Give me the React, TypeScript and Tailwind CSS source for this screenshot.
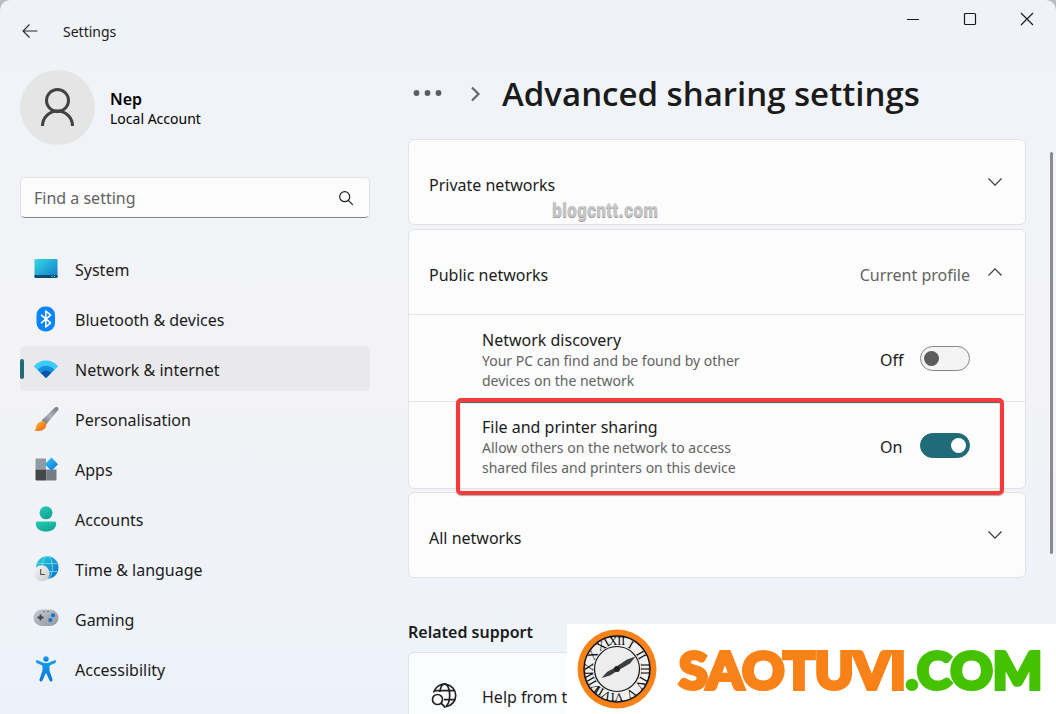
import { useState } from "react";
import type { ReactNode } from "react";

const NAV_ITEMS: { label: string; icon: ReactNode }[] = [
  { label: "System", icon: <SystemIcon /> },
  { label: "Bluetooth & devices", icon: <BluetoothIcon /> },
  { label: "Network & internet", icon: <WifiIcon /> },
  { label: "Personalisation", icon: <BrushIcon /> },
  { label: "Apps", icon: <AppsIcon /> },
  { label: "Accounts", icon: <AccountsIcon /> },
  { label: "Time & language", icon: <TimeIcon /> },
  { label: "Gaming", icon: <GamingIcon /> },
  { label: "Accessibility", icon: <AccessibilityIcon /> },
];

function SystemIcon() {
  return (
    <svg width="26" height="26" viewBox="0 0 26 26">
      <defs>
        <linearGradient id="sys" x1="0" y1="0" x2="1" y2="1">
          <stop offset="0" stopColor="#36dbe0" />
          <stop offset="1" stopColor="#1077cf" />
        </linearGradient>
      </defs>
      <rect x="1.500" y="3" width="23" height="19" rx="1.300" fill="url(#sys)" />
      <path d="M1.500 19h23v1.700a1.300 1.300 0 0 1-1.300 1.300H2.800a1.300 1.300 0 0 1-1.300-1.300z" fill="#0b4a6c" />
      <path d="M18.500 20.500h1M21 20.500h1" stroke="#bfe9f5" strokeWidth="1" />
    </svg>
  );
}

function BluetoothIcon() {
  return (
    <svg width="26" height="26" viewBox="0 0 26 26">
      <rect x="3.500" y="0.500" width="18.500" height="25" rx="8.500" fill="#0a84fb" />
      <path d="M8 8.800l9.600 8L12.800 21V5l4.800 4.200L8 17.200" fill="none" stroke="#fff" strokeWidth="1.600" strokeLinejoin="round" />
    </svg>
  );
}

function WifiIcon() {
  return (
    <svg width="26" height="26" viewBox="0 0 26 26">
      <path d="M0.800 10.200C7.500 2.600 18.500 2.600 25.200 10.200L13 22z" fill="#3bcbf6" />
      <path d="M4.600 13.800C9.500 8.300 16.500 8.300 21.400 13.800L13 22z" fill="#1590e2" />
      <path d="M7.800 17C10.800 13.700 15.200 13.700 18.200 17L13 22z" fill="#0d55a6" />
    </svg>
  );
}

function BrushIcon() {
  return (
    <svg width="26" height="26" viewBox="0 0 26 26">
      <defs>
        <linearGradient id="handle" x1="1" y1="0" x2="0" y2="1">
          <stop offset="0" stopColor="#6e7984" />
          <stop offset="0.500" stopColor="#a9b4bd" />
          <stop offset="1" stopColor="#66717b" />
        </linearGradient>
        <linearGradient id="bristle" x1="0" y1="0" x2="1" y2="1">
          <stop offset="0" stopColor="#ffc530" />
          <stop offset="1" stopColor="#ee5a16" />
        </linearGradient>
      </defs>
      <path d="M8.500 14.500L21.300 2C23.300 0.200 26.300 1.200 25.200 4L13 18.800z" fill="url(#handle)" />
      <path d="M8 15.500c3-1.300 6.300 1.500 4.800 5.200C11.300 24.800 5 26 0.800 24.200c2-.4 2-1.400 2.300-3.200C3.500 18 5.200 16.200 8 15.500z" fill="url(#bristle)" />
    </svg>
  );
}

function AppsIcon() {
  return (
    <svg width="26" height="26" viewBox="0 0 26 26">
      <defs>
        <linearGradient id="diamond" x1="0" y1="0" x2="1" y2="1">
          <stop offset="0" stopColor="#37c6f8" />
          <stop offset="1" stopColor="#0a74d8" />
        </linearGradient>
      </defs>
      <path d="M3.700 2.500H13v11H2.500V3.700c0-.7.500-1.200 1.200-1.200z" fill="#929aa4" />
      <path d="M2.500 13.500H13.300v11H3.700c-.7 0-1.200-.5-1.200-1.200z" fill="#45484b" />
      <path d="M13.300 13.500h10.200v9.800c0 .7-.5 1.200-1.200 1.200h-9z" fill="#747b83" />
      <path d="M18.500 1.600l6.600 6.700-6.600 6.700-6.700-6.700z" fill="url(#diamond)" />
    </svg>
  );
}

function AccountsIcon() {
  return (
    <svg width="26" height="26" viewBox="0 0 26 26">
      <defs>
        <linearGradient id="acct" x1="0" y1="0" x2="0.600" y2="1">
          <stop offset="0" stopColor="#25cdb4" />
          <stop offset="1" stopColor="#12a592" />
        </linearGradient>
      </defs>
      <circle cx="13" cy="6.800" r="6.500" fill="url(#acct)" />
      <path d="M4.500 15.500h17c.9 0 1.700.8 1.700 1.700 0 5.800-4.700 8.300-10.200 8.300S2.800 23 2.800 17.200c0-.9.800-1.700 1.700-1.700z" fill="url(#acct)" />
    </svg>
  );
}

function TimeIcon() {
  return (
    <svg width="26" height="26" viewBox="0 0 26 26">
      <defs>
        <linearGradient id="globe" x1="0" y1="0" x2="1" y2="1">
          <stop offset="0" stopColor="#2ed3da" />
          <stop offset="1" stopColor="#0a6dcb" />
        </linearGradient>
        <linearGradient id="dial" x1="0" y1="0" x2="1" y2="1">
          <stop offset="0" stopColor="#fafafa" />
          <stop offset="1" stopColor="#c9c9c9" />
        </linearGradient>
      </defs>
      <circle cx="14.300" cy="11.500" r="11.200" fill="url(#globe)" />
      <g fill="none" stroke="#65d5ec" strokeWidth="1">
        <ellipse cx="14.300" cy="11.500" rx="5.200" ry="11.200" />
        <path d="M4.500 7.500h19.800M4.500 15.500h19.800" />
      </g>
      <circle cx="8.700" cy="17.300" r="8" fill="url(#dial)" />
      <path d="M7.700 13v5.500h4.300" fill="none" stroke="#555" strokeWidth="1.200" />
    </svg>
  );
}

function GamingIcon() {
  return (
    <svg width="26" height="26" viewBox="0 0 26 26">
      <defs>
        <linearGradient id="pad" x1="0" y1="0" x2="1" y2="1">
          <stop offset="0" stopColor="#c4cad0" />
          <stop offset="1" stopColor="#9097a0" />
        </linearGradient>
      </defs>
      <rect x="0.500" y="3.500" width="25" height="16.500" rx="8.200" fill="url(#pad)" />
      <path d="M7.500 8.500v6M4.500 11.500h6" stroke="#3f4347" strokeWidth="1.800" />
      <path d="M10.500 5.500h1M14.500 5.500h1" stroke="#3f4347" strokeWidth="1.200" />
      <circle cx="20" cy="9.300" r="2" fill="#0c72cf" />
      <circle cx="17.300" cy="14" r="2" fill="#0c72cf" />
    </svg>
  );
}

function AccessibilityIcon() {
  return (
    <svg width="26" height="26" viewBox="0 0 26 26">
      <defs>
        <linearGradient id="acc" x1="0" y1="0" x2="0" y2="1">
          <stop offset="0" stopColor="#1a9fe8" />
          <stop offset="1" stopColor="#0c76d6" />
        </linearGradient>
      </defs>
      <circle cx="13" cy="3" r="2.700" fill="url(#acc)" />
      <path
        d="M4.800 4.300l5 2.100c2 .8 4.400.8 6.400 0l5-2.100c2-.7 2.900 1.900 1.100 2.700l-5 2.200c-.5.300-.8.600-.8 1.200v3.900l3 9.300c.5 1.900-2.200 2.700-3 1L13.600 18c-.2-.6-1-.6-1.200 0l-2.900 6.600c-.8 1.700-3.500.9-3-1l3-9.300v-3.900c0-.6-.3-.9-.8-1.200L3.700 7C1.900 6.200 2.800 3.600 4.800 4.300z"
        fill="url(#acc)"
      />
    </svg>
  );
}

function Chevron({ up = false }: { up?: boolean }) {
  return (
    <svg width="16" height="16" viewBox="0 0 16 16" fill="none" stroke="#3b3b3b" strokeWidth="1.200">
      <path d={up ? "M1.500 11.500L8 4.800l6.500 6.700" : "M1.500 4.500L8 11.200l6.500-6.700"} />
    </svg>
  );
}

function TitleBar() {
  return (
    <header className="flex h-[62px] items-center">
      <button aria-label="Back" className="ml-[22px]">
        <svg width="16" height="16" viewBox="0 0 16 16" fill="none" stroke="#2b2b2b" strokeWidth="1.100">
          <path d="M15.500 8H1M7.500 1.500L1 8l6.500 6.500" />
        </svg>
      </button>
      <span className="ml-[25px] flex-1 text-[14px]">Settings</span>
      <div className="flex self-start">
        <button aria-label="Minimise" className="flex h-[38px] w-[57px] items-center justify-center pr-px">
          <svg width="14" height="14" viewBox="0 0 14 14" stroke="#1a1a1a">
            <path d="M1 7.500h12" />
          </svg>
        </button>
        <button aria-label="Maximise" className="flex h-[38px] w-[57px] items-center justify-center pr-px">
          <svg width="14" height="14" viewBox="0 0 14 14" fill="none" stroke="#1a1a1a" strokeWidth="1.200">
            <rect x="1.500" y="1.500" width="11" height="11" rx="1" />
          </svg>
        </button>
        <button aria-label="Close" className="flex h-[38px] w-[57px] items-center justify-center pr-px">
          <svg width="14" height="14" viewBox="0 0 14 14" stroke="#1a1a1a" strokeWidth="1.200">
            <path d="M1 1l12 12M13 1L1 13" />
          </svg>
        </button>
      </div>
    </header>
  );
}

function Sidebar() {
  const [active, setActive] = useState("Network & internet");

  return (
    <aside className="w-[350px] shrink-0 pt-2">
      <div className="flex items-center gap-[15px]">
        <div className="flex size-[75px] items-center justify-center rounded-full bg-[#e5e5e5]">
          <svg width="36" height="40" viewBox="0 0 36 40" fill="none" stroke="#424242" strokeWidth="3">
            <circle cx="17.500" cy="12.500" r="11" />
            <path d="M2.500 38a15 15 0 0 1 30 0" />
          </svg>
        </div>
        <div className="pt-[3px]">
          <div className="text-[16px] leading-5 font-semibold text-black">Nep</div>
          <div className="text-[14px] leading-5 text-black">Local Account</div>
        </div>
      </div>

      <label className="mt-8 flex h-[41px] items-center rounded-[5px] border border-[#e0e1e4] border-b-[#85868a] bg-[#fcfcfd] pr-[15px] pl-[13px]">
        <input
          type="text"
          aria-label="Find a setting"
          placeholder="Find a setting"
          className="min-w-0 flex-1 bg-transparent text-[16px] outline-none placeholder:text-[#636363]"
        />
        <svg width="16" height="16" viewBox="0 0 16 16" fill="none" stroke="#222" strokeWidth="1.200">
          <circle cx="6.700" cy="6.700" r="5" />
          <path d="M10.300 10.300l4.500 4.500" />
        </svg>
      </label>

      <nav className="mt-7 flex flex-col gap-[5px]">
        {NAV_ITEMS.map((item) => (
          <button
            key={item.label}
            onClick={() => setActive(item.label)}
            className={`relative flex h-[45px] items-center rounded-[5px] pl-[13px] text-left text-[16px] ${
              item.label === active ? "bg-[#e9e9eb]" : ""
            }`}
          >
            {item.label === active && (
              <span className="absolute top-[13px] left-0 h-5 w-1 rounded-full bg-[#1f6b78]" />
            )}
            {item.icon}
            <span className="ml-4 pt-[3px]">{item.label}</span>
          </button>
        ))}
      </nav>
    </aside>
  );
}

interface ToggleRowProps {
  id: string;
  title: string;
  description: string;
  initial: boolean;
  highlighted?: boolean;
}

function ToggleRow({ id, title, description, initial, highlighted }: ToggleRowProps) {
  const [on, setOn] = useState(initial);

  return (
    <div className="relative flex h-[87px] items-center border-t border-[#e4e4e7] pr-[55px] pl-[73px]">
      <div className="flex-1 pt-1">
        <label htmlFor={id} className="block text-[16px] leading-[22px]">
          {title}
        </label>
        <p className="w-[280px] text-[14px] leading-5 text-[#636363]">{description}</p>
      </div>
      <span className="w-10 pt-[3px] text-[16px]">{on ? "On" : "Off"}</span>
      <input
        id={id}
        type="checkbox"
        role="switch"
        checked={on}
        onChange={(e) => setOn(e.target.checked)}
        className="flex h-[25px] w-[50px] appearance-none items-center rounded-full border border-[#868686] bg-[#f4f4f4] px-[3px] before:size-[15px] before:rounded-full before:bg-[#5c5c5c] checked:justify-end checked:border-[#1f6b78] checked:bg-[#1f6b78] checked:before:bg-white"
      />
      {highlighted && (
        <div className="pointer-events-none absolute -top-1 right-[21px] -bottom-[7px] left-[47px] z-10 rounded-[5px] border-4 border-[#f53b3a] shadow-[0_1px_1px_#77777799,inset_0_1px_1px_#555555]" />
      )}
    </div>
  );
}

function NetworkHeader({ label, open, note }: { label: string; open?: boolean; note?: string }) {
  return (
    <button className="flex h-[84px] w-full items-center px-5 pr-[22px] text-left text-[16px]">
      <span className="flex-1 pt-[5px]">{label}</span>
      {note && <span className="mr-[17px] pt-[5px] text-[#636363]">{note}</span>}
      <Chevron up={open} />
    </button>
  );
}

function Watermark() {
  const numerals = ["XII", "I", "II", "III", "IV", "V", "VI", "VII", "VIII", "IX", "X", "XI"];

  return (
    <div className="absolute right-0 bottom-0 z-20 flex h-[90px] w-[489px] items-center bg-white pl-[10px]">
      <svg width="80" height="80" viewBox="0 0 80 80" className="shrink-0">
        <circle cx="40" cy="40" r="39.500" fill="#f88218" />
        <circle cx="40" cy="40" r="33" fill="#f0f0f0" stroke="#111" strokeWidth="1.500" />
        <circle cx="40" cy="40" r="22.500" fill="#ededed" stroke="#111" strokeWidth="1.200" />
        {numerals.map((n, i) => (
          <text
            key={n}
            x="40"
            y="16"
            textAnchor="middle"
            transform={`rotate(${i * 30} 40 40)`}
            className="fill-black font-['Liberation_Serif',serif] text-[12px]"
          >
            {n}
          </text>
        ))}
        <path d="M24.500 49l5.500-6 8-4.500 12-8 8.500-3-5.500 7-12 7-8 5z" fill="#3d3d3d" />
        <circle cx="40" cy="40" r="3" fill="#222" />
      </svg>
      <div className="ml-[22px] font-['Lato',sans-serif] text-[52px] leading-none font-black whitespace-nowrap text-[#f88218] [-webkit-text-stroke:4px_#f88218]">
        SAOTUVI<span className="text-[#44c200] [-webkit-text-stroke:4px_#44c200]">.COM</span>
      </div>
    </div>
  );
}

export default function App() {
  return (
    <div className="h-screen bg-[#b9bdc3] font-['Noto_Sans','Open_Sans',sans-serif] text-[#1b1b1b]">
      <div className="relative flex h-full flex-col overflow-hidden rounded-t-[10px] bg-linear-to-b from-[#eff3f8] via-[#f3f3f6] to-[#edf2fa]">
        <TitleBar />
        <div className="flex min-h-0 flex-1 pl-5">
          <Sidebar />
          <main className="ml-[38px] min-w-0 flex-1">
            <div className="flex h-[77px] items-center pb-[14px]">
              <button aria-label="More" className="ml-[5px]">
                <svg width="30" height="8" viewBox="0 0 30 8" fill="#5d5d5f">
                  <circle cx="3.500" cy="3" r="2.900" />
                  <circle cx="14.500" cy="3" r="2.900" />
                  <circle cx="25.500" cy="3" r="2.900" />
                </svg>
              </button>
              <svg width="12" height="16" viewBox="0 0 12 16" fill="none" stroke="#66666a" strokeWidth="2.200" className="ml-[27px]">
                <path d="M2 1.500L8.500 8 2 14.500" />
              </svg>
              <h1 className="ml-5 font-['Open_Sans',sans-serif] text-[33px] leading-[48px] font-semibold">
                Advanced sharing settings
              </h1>
            </div>

            <section className="relative rounded-[6px] border border-[#e2e3e7] bg-[#fcfcfd]">
              <NetworkHeader label="Private networks" />
              <span className="absolute bottom-0 left-[143px] font-['Liberation_Sans_Narrow','Roboto_Condensed',Roboto,sans-serif] text-[20px] leading-7 font-bold text-[#c6c6c6] [text-shadow:0_1px_0_#999]">
                blogcntt.com
              </span>
            </section>
            <section className="mt-1 rounded-[6px] border border-[#e2e3e7] bg-[#fcfcfc]">
              <NetworkHeader label="Public networks" note="Current profile" open />
              <ToggleRow
                id="discovery"
                title="Network discovery"
                description="Your PC can find and be found by other devices on the network"
                initial={false}
              />
              <ToggleRow
                id="sharing"
                title="File and printer sharing"
                description="Allow others on the network to access shared files and printers on this device"
                initial
                highlighted
              />
            </section>
            <section className="mt-[3px] rounded-[6px] border border-[#e2e3e7] bg-[#fcfcfc]">
              <NetworkHeader label="All networks" />
            </section>

            <h2 className="mt-[42px] text-[16px] leading-6 font-semibold">Related support</h2>
            <section className="mt-2 flex h-[86px] items-center rounded-[6px] border border-[#e0e4ea] bg-[#fbfcfe] pl-[22px]">
              <svg width="27" height="27" viewBox="0 0 27 27" fill="none" stroke="#222" strokeWidth="1.700">
                <path d="M2.500 10.500A11.300 11.300 0 1 1 15 24.700" />
                <path d="M8.800 10C9.500 5 11.500 1.800 13.700 1.800c2.700 0 5 5 5 11.300 0 5-1.300 9.500-3.700 11.300" />
                <path d="M3.800 8.700h20M13 17.700h11" />
                <circle cx="6.500" cy="17.500" r="5" />
                <path d="M10 21.200l4.500 4.500" />
              </svg>
              <a href="#help" className="ml-6 pt-1 text-[16px]">
                Help from the web
              </a>
            </section>
          </main>
          <div className="mt-[90px] mr-[3px] ml-6 h-[402px] w-[3px] shrink-0 rounded-full bg-[#8b8b8e]" />
        </div>
        <Watermark />
      </div>
    </div>
  );
}
